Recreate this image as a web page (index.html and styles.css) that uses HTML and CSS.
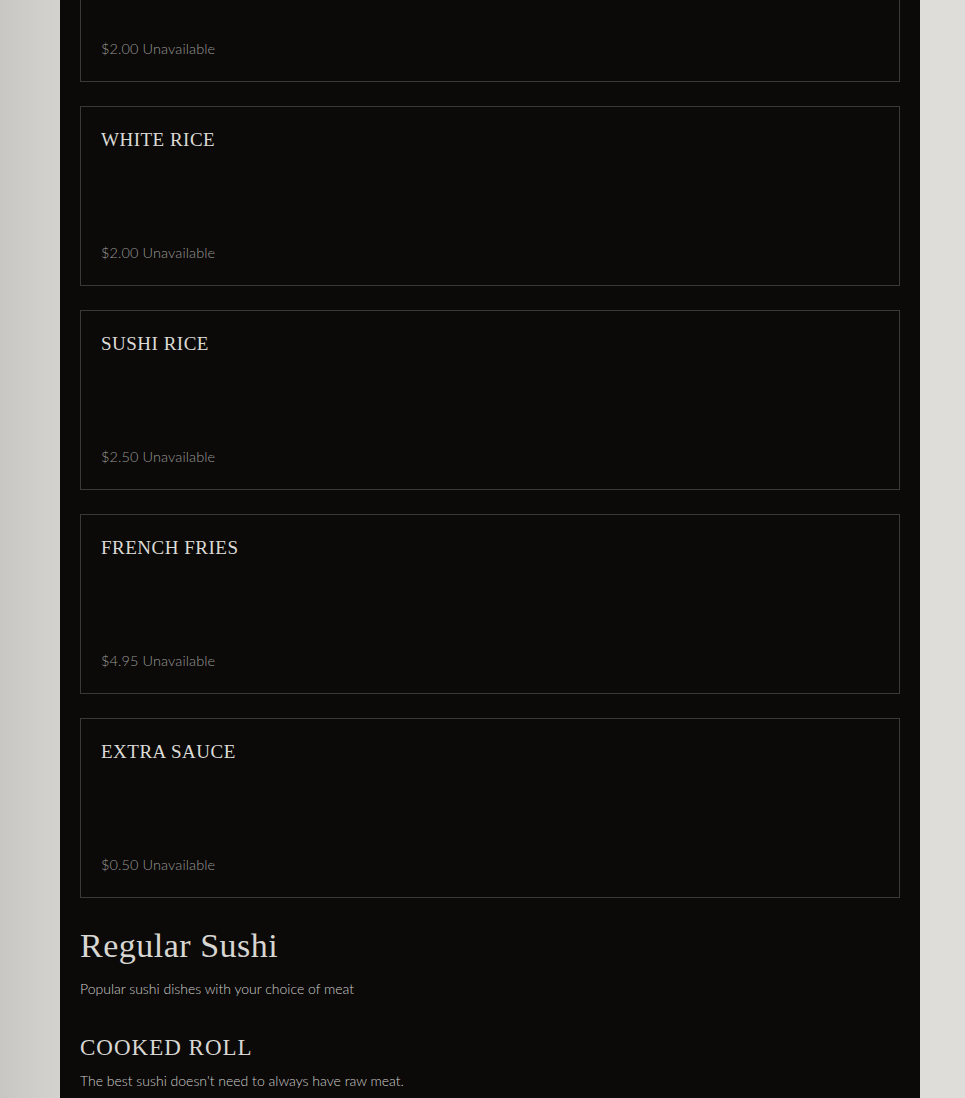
FILE: index.html
```html
<!DOCTYPE html>
<html lang="en">
<head>
<meta charset="utf-8">
<title>Menu</title>
<link rel="stylesheet" href="styles.css">
</head>
<body>
<main class="panel">
  <section class="items">
    <article class="card card-first">
      <p class="card-price">$2.00 Unavailable</p>
    </article>
    <article class="card">
      <h3 class="card-title">WHITE RICE</h3>
      <p class="card-price">$2.00 Unavailable</p>
    </article>
    <article class="card">
      <h3 class="card-title">SUSHI RICE</h3>
      <p class="card-price">$2.50 Unavailable</p>
    </article>
    <article class="card">
      <h3 class="card-title">FRENCH FRIES</h3>
      <p class="card-price">$4.95 Unavailable</p>
    </article>
    <article class="card">
      <h3 class="card-title">EXTRA SAUCE</h3>
      <p class="card-price">$0.50 Unavailable</p>
    </article>
  </section>
  <section class="category">
    <h2 class="category-title">Regular Sushi</h2>
    <p class="category-desc">Popular sushi dishes with your choice of meat</p>
    <h3 class="sub-title">COOKED ROLL</h3>
    <p class="sub-desc">The best sushi doesn't need to always have raw meat.</p>
  </section>
</main>
</body>
</html>
```
FILE: styles.css
```css
html, body {
  margin: 0;
  padding: 0;
}
body {
  background: linear-gradient(90deg, #c9c7c3 0%, #d3d2ce 6%, #d9d8d4 50%, #dfddd9 100%);
  min-height: 1098px;
  overflow: hidden;
  font-family: "Lato", "Liberation Sans", sans-serif;
}
.panel {
  width: 820px;
  margin: 0 auto 0 60px;
  background: #0b0a09;
  padding: 0 20px 40px;
  min-height: 1098px;
}
.items {
  display: flex;
  flex-direction: column;
  gap: 24px;
}
.card {
  height: 180px;
  box-sizing: border-box;
  border: 1px solid #3a3937;
  padding: 21px 20px 20px;
  display: flex;
  flex-direction: column;
  justify-content: space-between;
}
.card-first {
  margin-top: -98px;
  justify-content: flex-end;
}
.card-title {
  margin: 0;
  font-family: "Liberation Serif", serif;
  font-weight: 400;
  font-size: 19px;
  letter-spacing: 0.5px;
  line-height: 24px;
  color: #dcdad6;
}
.card-price {
  margin: 0 0 2px;
  font-size: 14.5px;
  font-weight: 300;
  line-height: 20px;
  color: #9a9894;
  letter-spacing: 0.1px;
}
.category {
  padding-top: 28px;
}
.category-title {
  margin: 0;
  font-family: "Liberation Serif", serif;
  font-weight: 400;
  font-size: 34px;
  letter-spacing: 0.5px;
  line-height: 40px;
  color: #d8d6d2;
}
.category-desc {
  margin: 13px 0 0;
  font-size: 14px;
  font-weight: 300;
  line-height: 20px;
  color: #cfcdc9;
}
.sub-title {
  margin: 35px 0 0;
  font-family: "Liberation Serif", serif;
  font-weight: 400;
  font-size: 23px;
  letter-spacing: 1px;
  line-height: 28px;
  color: #d8d6d2;
}
.sub-desc {
  margin: 9px 0 0;
  font-size: 14px;
  font-weight: 300;
  line-height: 20px;
  color: #cfcdc9;
}
```
